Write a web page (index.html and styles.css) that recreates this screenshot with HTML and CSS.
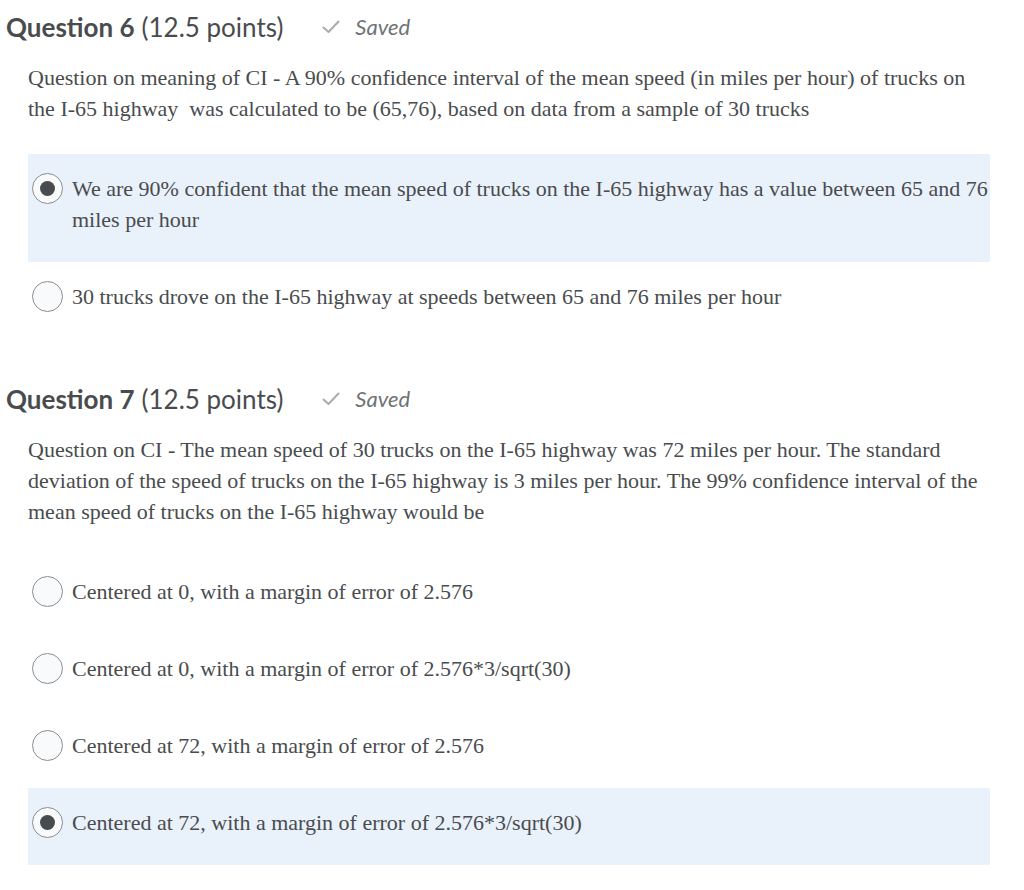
FILE: index.html
```html
<!DOCTYPE html>
<html>
<head>
<meta charset="utf-8">
<link rel="stylesheet" href="styles.css">
</head>
<body>
<div class="page">
  <section class="question">
    <h2 class="q-head"><span class="q-num">Question 6</span> <span class="q-pts">(12.5 points)</span>
      <span class="saved"><svg class="check" viewBox="0 0 18 14" width="18" height="14"><path d="M1.5 7.5 L6.5 12 L16.5 1.5" fill="none" stroke="#a9acaf" stroke-width="2" stroke-linecap="round" stroke-linejoin="round"/></svg><span class="saved-text">Saved</span></span>
    </h2>
    <p class="q-text">Question on meaning of CI - A 90% confidence interval of the mean speed (in miles per hour) of trucks on the I-65 highway&nbsp; was calculated to be (65,76), based on data from a sample of 30 trucks</p>
    <div class="options">
      <div class="option selected"><span class="radio"><span class="dot"></span></span><span class="opt-text">We are 90% confident that the mean speed of trucks on the I-65 highway has a value between 65 and 76 miles per hour</span></div>
      <div class="option"><span class="radio"></span><span class="opt-text">30 trucks drove on the I-65 highway at speeds between 65 and 76 miles per hour</span></div>
    </div>
  </section>
  <section class="question">
    <h2 class="q-head"><span class="q-num">Question 7</span> <span class="q-pts">(12.5 points)</span>
      <span class="saved"><svg class="check" viewBox="0 0 18 14" width="18" height="14"><path d="M1.5 7.5 L6.5 12 L16.5 1.5" fill="none" stroke="#a9acaf" stroke-width="2" stroke-linecap="round" stroke-linejoin="round"/></svg><span class="saved-text">Saved</span></span>
    </h2>
    <p class="q-text">Question on CI - The mean speed of 30 trucks on the I-65 highway was 72 miles per hour. The standard deviation of the speed of trucks on the I-65 highway is 3 miles per hour. The 99% confidence interval of the mean speed of trucks on the I-65 highway would be</p>
    <div class="options">
      <div class="option"><span class="radio"></span><span class="opt-text">Centered at 0, with a margin of error of 2.576</span></div>
      <div class="option"><span class="radio"></span><span class="opt-text">Centered at 0, with a margin of error of 2.576*3/sqrt(30)</span></div>
      <div class="option"><span class="radio"></span><span class="opt-text">Centered at 72, with a margin of error of 2.576</span></div>
      <div class="option selected"><span class="radio"><span class="dot"></span></span><span class="opt-text">Centered at 72, with a margin of error of 2.576*3/sqrt(30)</span></div>
    </div>
  </section>
</div>
</body>
</html>
```

FILE: styles.css
```css
html, body {
  margin: 0;
  padding: 0;
  background: #ffffff;
}
.page {
  padding-top: 12px;
  width: 1024px;
  color: #494c4e;
}
.question {
  margin-bottom: 45px;
}
.q-head {
  margin: 0 0 20px 6px;
  font-family: Lato, "Liberation Sans", sans-serif;
  font-size: 26px;
  line-height: 30px;
  font-weight: 400;
  display: flex;
  align-items: center;
  color: #494c4e;
}
.q-num {
  font-weight: 700;
}
.q-pts {
  margin-left: 7px;
}
.saved {
  display: inline-flex;
  align-items: center;
  margin-left: 39px;
}
.check {
  margin-right: 15px;
}
.saved-text {
  font-style: italic;
  font-size: 22px;
  color: #6e7376;
}
.q-text {
  margin: 0 0 30px 28px;
  width: 962px;
  font-family: "Liberation Serif", "Times New Roman", serif;
  font-size: 22px;
  line-height: 31px;
}
.options {
  margin-left: 28px;
  width: 962px;
}
.option {
  display: flex;
  align-items: flex-start;
  padding: 19px 0 27px 4px;
  font-family: "Liberation Serif", "Times New Roman", serif;
  font-size: 22px;
  line-height: 31px;
}
.option.selected {
  background: #e9f1fb;
}
.radio {
  flex: none;
  box-sizing: border-box;
  width: 31px;
  height: 31px;
  border: 1px solid #8b8e91;
  border-radius: 50%;
  background: #f9fafc;
  margin-right: 9px;
  display: flex;
  align-items: center;
  justify-content: center;
}
.dot {
  width: 15px;
  height: 15px;
  border-radius: 50%;
  background: #494c4e;
}
.opt-text {
  flex: 1;
}
```
